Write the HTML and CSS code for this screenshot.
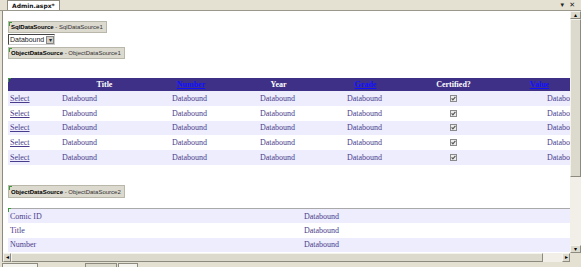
FILE: index.html
```html
<!DOCTYPE html>
<html lang="en">
<head>
    <meta charset="UTF-8">
    <title>Admin.aspx</title>
    <link rel="stylesheet" href="styles.css">
</head>
<body>
    <div class="tabstrip">
        <div class="doc-tab">Admin.aspx*</div>
        <div class="tab-buttons"><span>&#9662;</span><span>&#10005;</span></div>
    </div>

    <div class="editor">
        <div class="canvas">
            <div class="ds-box mark"><b>SqlDataSource</b> - SqlDataSource1</div>
            <div class="dropdown"><span>Databound</span><span class="dd-arrow">&#9662;</span></div>
            <div class="ds-box mark"><b>ObjectDataSource</b> - ObjectDataSource1</div>

            <!-- GridView -->
            <div class="grid mark">
                <div class="grid-head">
                    <span></span>
                    <span>Title</span>
                    <a>Number</a>
                    <span>Year</span>
                    <a>Grade</a>
                    <span>Certified?</span>
                    <a>Value</a>
                </div>
                <div id="grid-rows"></div>
            </div>

            <div class="ds-box ds-box-2 mark"><b>ObjectDataSource</b> - ObjectDataSource2</div>

            <!-- DetailsView -->
            <div class="details mark">
                <div class="detail-row"><span>Comic ID</span><span>Databound</span></div>
                <div class="detail-row"><span>Title</span><span>Databound</span></div>
                <div class="detail-row"><span>Number</span><span>Databound</span></div>
            </div>
        </div>
        <div class="vscroll">
            <div class="sb-btn">&#9652;</div>
            <div class="sb-thumb"></div>
            <div class="sb-track"></div>
            <div class="sb-btn">&#9662;</div>
        </div>
    </div>

    <div class="hbar">
        <div class="hscroll">
            <div class="sb-btn">&#9666;</div>
            <div class="sb-thumb"></div>
            <div class="sb-track"></div>
            <div class="sb-btn">&#9656;</div>
        </div>
        <div class="corner"></div>
    </div>

    <div class="bottom-strip">
        <span class="mini-tab t1"></span>
        <span class="mini-tab t2"></span>
        <span class="mini-tab t3"></span>
    </div>

    <script>
        const rowsDiv = document.getElementById('grid-rows');
        const check = '<svg width="7" height="7" viewBox="0 0 7 7"><rect x="0.5" y="0.5" width="6" height="6" fill="#ececec" stroke="#8a8a8a"/><path d="M1.6 3.4 L2.9 4.8 L5.4 1.9" fill="none" stroke="#555" stroke-width="1.2"/></svg>';
        for (let i = 0; i < 5; i++) {
            const row = document.createElement('div');
            row.classList.add('grid-row');
            if (i % 2 === 0) row.classList.add('alt');
            row.innerHTML = '<a>Select</a><span>Databound</span><span>Databound</span>' +
                '<span>Databound</span><span>Databound</span><span class="cb">' + check + '</span>' +
                '<span class="num">Databound</span>';
            rowsDiv.appendChild(row);
        }
    </script>
</body>
</html>
```

FILE: styles.css
```css
body {
    margin: 0;
    width: 581px;
    height: 267px;
    overflow: hidden;
    background-color: #e6e3d6;
    font-family: "Liberation Serif", "Times New Roman", serif;
}
.tabstrip {
    height: 11px;
    display: flex;
    align-items: flex-end;
    justify-content: space-between;
    padding-left: 7px;
    background-color: #e4e1d3;
    border-bottom: 1px solid #9a988c;
    box-sizing: border-box;
}
.doc-tab {
    height: 9px;
    padding: 0 4px;
    background: #fff;
    border: 1px solid #8d8b80;
    border-bottom: none;
    font-family: "DejaVu Sans", sans-serif;
    font-size: 6px;
    font-weight: bold;
    line-height: 9px;
    color: #111;
}
.tab-buttons {
    display: flex;
    gap: 5px;
    padding-right: 6px;
    font-family: "DejaVu Sans", sans-serif;
    font-size: 7px;
    line-height: 10px;
    color: #222;
}
.editor {
    display: flex;
    height: 242px;
    margin-left: 2px;
}
.canvas {
    flex: 1;
    background: #fff;
    border-left: 1px solid #8d8b80;
    overflow: hidden;
    padding: 10px 0 0 5px;
    font-size: 8px;
    color: #4a3c8c;
}
.mark {
    position: relative;
}
.mark::before {
    content: "";
    position: absolute;
    left: 0;
    top: 0;
    width: 2px;
    height: 3px;
    border-left: 1px solid #3c9a3c;
    border-top: 1px solid #3c9a3c;
}
.ds-box {
    display: inline-block;
    height: 10px;
    padding: 0 3px 0 2px;
    background: #dcd9cf;
    border: 1px solid #b9b6aa;
    font-family: "Liberation Sans", Arial, sans-serif;
    font-size: 6px;
    line-height: 11px;
    color: #333;
    white-space: nowrap;
}
.ds-box b {
    color: #000;
}
.dropdown {
    display: flex;
    align-items: center;
    width: 44px;
    height: 9px;
    margin: 1px 0 2px 0;
    border: 1px solid;
    border-color: #444 #ccc #ccc #444;
    font-family: "Liberation Sans", Arial, sans-serif;
    font-size: 7px;
    color: #222;
    justify-content: space-between;
    padding-left: 1px;
}
.dd-arrow {
    width: 8px;
    height: 8px;
    background: #d4d0c8;
    border: 1px solid #888;
    box-sizing: border-box;
    font-size: 6px;
    line-height: 6px;
    text-align: center;
}
.grid {
    margin-top: 19px;
    width: 576px;
}
.grid-head {
    display: grid;
    grid-template-columns: 52px 89px 84px 91px 83px 93px 79px;
    height: 13px;
    align-items: center;
    background: #3e3087;
    color: #fff;
    font-weight: bold;
    text-align: center;
}
.grid-head a {
    color: #1010ff;
    text-decoration: underline;
}
.grid-row {
    display: grid;
    grid-template-columns: 52px 110px 88px 87px 75px 66px 98px;
    height: 14.8px;
    align-items: center;
    background: #fff;
}
.grid-row.alt {
    background: #ededfd;
}
.grid-row > * {
    padding-left: 2px;
}
.grid-row a {
    color: #4a3c8c;
    text-decoration: underline;
}
.grid-row .cb {
    padding: 0;
    display: flex;
    justify-content: center;
    height: 7px;
}
.grid-row .cb svg {
    display: block;
}
.grid-row .num {
    text-align: right;
    padding-right: 2px;
}
.ds-box-2 {
    margin-top: 20px;
    height: 11px;
    line-height: 12px;
}
.details {
    margin-top: 10px;
    width: 576px;
    border-top: 1px solid #a9a9a9;
}
.details::before {
    top: -1px;
}
.detail-row {
    display: grid;
    grid-template-columns: 294px 1fr;
    height: 14.3px;
    align-items: center;
    background: #ededfd;
    padding-left: 2px;
}
.detail-row:nth-child(2) {
    background: #fff;
}
.vscroll {
    width: 11px;
    display: flex;
    flex-direction: column;
    background: #f1efe7;
}
.sb-btn {
    height: 8px;
    background: #dcd9cd;
    border: 1px solid;
    border-color: #f4f3ee #8d8b80 #8d8b80 #f4f3ee;
    box-sizing: border-box;
    font-size: 6px;
    line-height: 6px;
    text-align: center;
    color: #000;
}
.sb-thumb {
    height: 158px;
    background: #dcd9cd;
    border: 1px solid;
    border-color: #f4f3ee #8d8b80 #8d8b80 #f4f3ee;
    box-sizing: border-box;
}
.sb-track {
    flex: 1;
}
.hbar {
    display: flex;
    height: 9px;
    margin-left: 2px;
}
.hscroll {
    flex: 1;
    display: flex;
    background: #f1efe7;
    border-left: 1px solid #8d8b80;
}
.hscroll .sb-btn {
    width: 8px;
    height: 9px;
}
.hscroll .sb-thumb {
    height: 9px;
    width: 532px;
}
.corner {
    width: 11px;
    background: #e4e1d3;
}
.bottom-strip {
    height: 5px;
    position: relative;
    background: #e4e1d3;
}
.mini-tab {
    position: absolute;
    top: 1px;
    height: 5px;
    border: 1px solid #8d8b80;
    background: #f4f3ee;
}
.t1 { left: 2px; width: 34px; }
.t2 { left: 85px; width: 30px; background: #dcd9cd; }
.t3 { left: 118px; width: 18px; }
```
